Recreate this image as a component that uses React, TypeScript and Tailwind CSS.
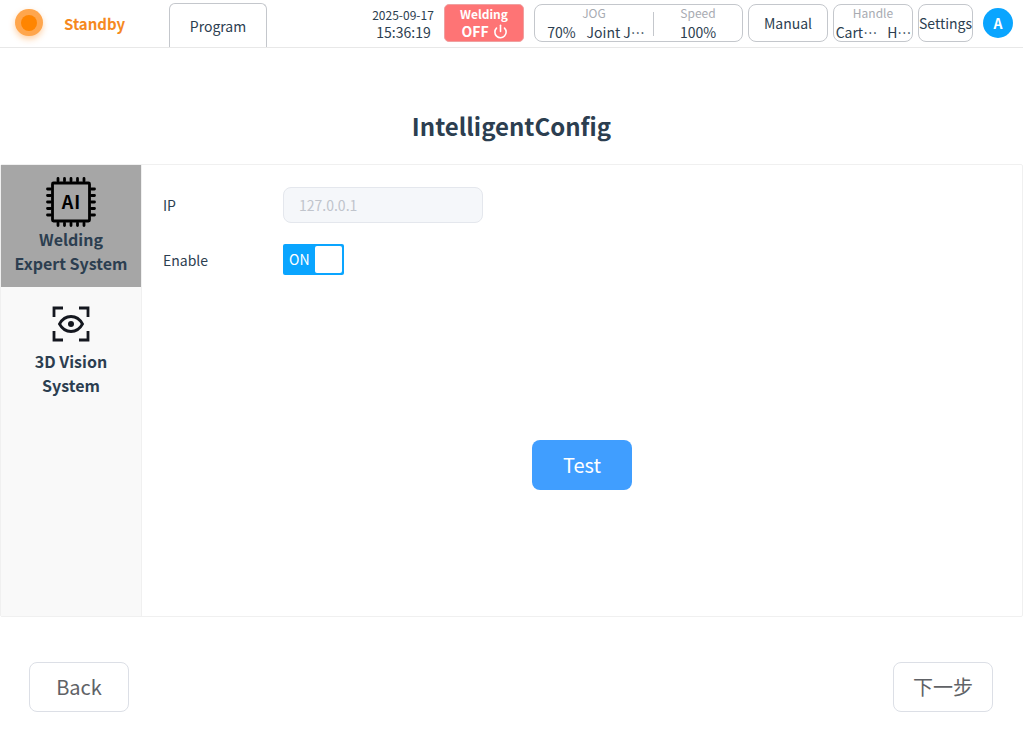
import { Power } from "lucide-react";

const font = "font-['Noto_Sans_CJK_SC','Noto_Sans',sans-serif]";

function ChipIcon() {
  return (
    <svg width="50" height="50" viewBox="0 0 50 50" fill="none" stroke="#000" className="block">
      <rect x="6.500" y="6" width="37" height="38" rx="1" strokeWidth="2.800" />
      <g strokeWidth="2.800" strokeLinecap="round">
        <path d="M12 4V1.500M18.500 4V1.500M25 4V1.500M31.500 4V1.500M38 4V1.500" />
        <path d="M12 46v2.500M18.500 46v2.500M25 46v2.500M31.500 46v2.500M38 46v2.500" />
        <path d="M4.500 12H1.500M4.500 18.500H1.500M4.500 25H1.500M4.500 31.500H1.500M4.500 38H1.500" />
        <path d="M45.500 12h3M45.500 18.500h3M45.500 25h3M45.500 31.500h3M45.500 38h3" />
      </g>
      <text x="25.500" y="31.500" textAnchor="middle" fontSize="18" fontWeight="700" letterSpacing="1" fill="#000" stroke="none" fontFamily="'Noto Sans CJK SC',sans-serif">
        AI
      </text>
    </svg>
  );
}

function VisionIcon() {
  return (
    <svg width="38" height="36" viewBox="0 0 38 36" fill="none" stroke="#14171f" className="block">
      <path d="M2 11V2h9M27 2h9v9M2 25v9h9M27 34h9v-9" strokeWidth="2.800" />
      <path d="M7.500 18C10.500 12.500 14.500 10.500 19 10.500S27.500 12.500 30.500 18C27.500 23.500 23.500 25.500 19 25.500S10.500 23.500 7.500 18Z" strokeWidth="2.800" />
      <circle cx="19" cy="18" r="3" fill="#14171f" stroke="none" />
    </svg>
  );
}

function Header() {
  return (
    <header className="flex h-[48px] items-start border-b border-[#e8e8e8] text-[#2c3e50]">
      <div className="ml-[15px] mt-[9px] flex h-[27px] w-[28px] items-center justify-center rounded-full bg-[#ffa64d] shadow-[0_3px_6px_rgba(255,140,30,0.4)]">
        <div className="h-[16px] w-[16px] rounded-full bg-[#ff8500]" />
      </div>
      <div className="ml-[21px] mt-[12px] w-[105px] text-[15px] font-bold leading-[24px] text-[#f5891f]">Standby</div>
      <div className="flex h-[44px] w-[98px] mt-[3px] items-center justify-center rounded-t-[6px] border border-b-0 border-[#c4c7cc] text-[14px] leading-[20px] pt-[1px]">
        Program
      </div>
      <div className="ml-[105px] mt-[6px] w-[62px] text-center leading-[18px]">
        <div className="text-[12px]">2025-09-17</div>
        <div className="-mt-px pl-px text-[14px]">15:36:19</div>
      </div>
      <div className="ml-[10px] mt-[4px] flex h-[38px] w-[80px] flex-col items-center justify-center rounded-[5px] border border-[#f0a0a0] bg-[#fe7475] font-bold text-white">
        <div className="text-[12px] leading-[17px]">Welding</div>
        <div className="flex items-center gap-[4px] pl-px text-[14px] leading-[19px]">
          OFF <Power size={15} strokeWidth={2.5} />
        </div>
      </div>
      <div className="ml-[10px] mt-[4px] flex h-[38px] w-[209px] rounded-[8px] border border-[#c4c7cc]">
        <div className="flex w-[118px] flex-col items-center">
          <div className="text-[12px] leading-[16px] text-[#a8abb2]">JOG</div>
          <div className="flex gap-[11px] whitespace-nowrap pl-[4px] text-[14px] leading-[22px]">
            <span>70%</span>
            <span>Joint J…</span>
          </div>
        </div>
        <div className="mt-[7px] h-[24px] w-px bg-[#c4c7cc]" />
        <div className="flex flex-1 flex-col items-center">
          <div className="text-[12px] leading-[16px] text-[#a8abb2]">Speed</div>
          <div className="text-[14px] leading-[22px]">100%</div>
        </div>
      </div>
      <div className="ml-[5px] mt-[4px] flex h-[38px] w-[80px] items-center justify-center rounded-[8px] border border-[#c4c7cc] text-[14px]">
        Manual
      </div>
      <div className="ml-[5px] mt-[4px] flex h-[38px] w-[80px] flex-col items-center rounded-[8px] border border-[#c4c7cc]">
        <div className="text-[12px] leading-[16px] text-[#a8abb2]">Handle</div>
        <div className="flex gap-[10px] whitespace-nowrap pl-px text-[14px] leading-[22px]">
          <span>Cart…</span>
          <span>H…</span>
        </div>
      </div>
      <div className="ml-[5px] mt-[4px] flex h-[38px] w-[55px] items-center justify-center rounded-[8px] border border-[#c4c7cc] text-[14px]">
        Settings
      </div>
      <div className="ml-[10px] mt-[8px] flex h-[30px] w-[30px] items-center justify-center rounded-full bg-[#0aa5ff] text-[14px] font-bold text-white">
        A
      </div>
    </header>
  );
}

export default function App() {
  return (
    <div lang="zh-CN" className={`h-[736px] w-[1023px] overflow-hidden bg-white ${font}`}>
      <Header />
      <h1 className="mt-[60px] h-[36px] text-center text-[24px] font-bold leading-[36px] text-[#2c3e50]">IntelligentConfig</h1>
      <main className="mt-[20px] flex h-[453px] rounded-[2px] border border-[#f0f0f0]">
        <aside className="w-[141px] border-r border-[#f0f0f0] bg-[#f9f9f9] text-center text-[16px] font-bold leading-[24px] text-[#2c3e50]">
          <div className="flex h-[122px] flex-col items-center bg-[#a6a6a6] pt-[12px]">
            <ChipIcon />
            <div>Welding</div>
            <div>Expert System</div>
          </div>
          <div className="flex flex-col items-center pt-[19px]">
            <VisionIcon />
            <div className="mt-[7px]">3D Vision</div>
            <div>System</div>
          </div>
        </aside>
        <section className="relative flex-1 text-[14px] text-[#2c3e50]">
          <div className="ml-[21px] mt-[22px] flex items-center">
            <label className="w-[120px]">IP</label>
            <div className="flex h-[36px] w-[200px] items-center rounded-[8px] border border-[#e4e7ed] bg-[#f5f7fa] px-[15px] text-[#c0c4cc]">
              127.0.0.1
            </div>
          </div>
          <div className="ml-[21px] mt-[21px] flex items-center">
            <label className="w-[120px] pt-[2px]">Enable</label>
            <div className="flex h-[31px] w-[61px] items-center justify-between rounded-[2px] bg-[#0aa5ff] pl-[6px] pr-[2px] text-white">
              ON
              <div className="h-[27px] w-[27px] rounded-[2px] bg-white" />
            </div>
          </div>
          <div className="mt-[165px] ml-[390px] flex h-[50px] w-[100px] items-center justify-center rounded-[8px] bg-[#409eff] text-[20px] text-white">
            Test
          </div>
        </section>
      </main>
      <footer className="mt-[45px] flex justify-between px-[29px] pr-[30px] text-[20px] text-[#606266]">
        <div className="flex h-[50px] w-[100px] items-center justify-center rounded-[8px] border border-[#dcdfe6]">Back</div>
        <div className="flex h-[50px] w-[100px] items-center justify-center rounded-[8px] border border-[#dcdfe6]">下一步</div>
      </footer>
    </div>
  );
}
